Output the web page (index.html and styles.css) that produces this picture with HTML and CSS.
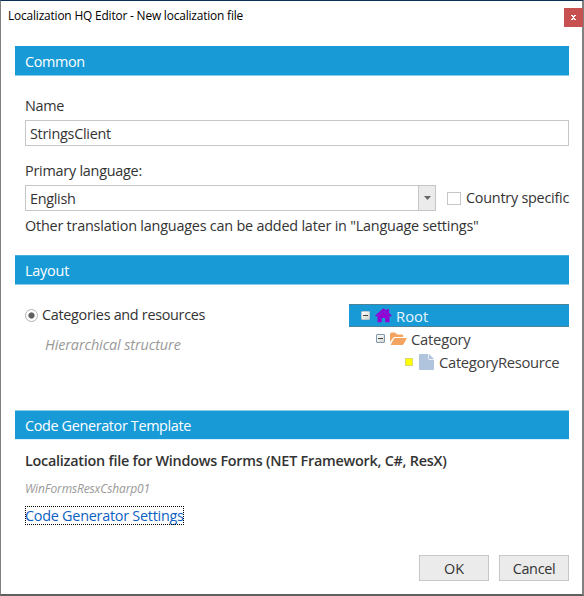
FILE: index.html
```html
<!DOCTYPE html>
<html lang="en">
<head>
<meta charset="utf-8">
<title>Localization HQ Editor</title>
<link rel="stylesheet" href="styles.css">
</head>
<body>
<main class="window">
  <header class="titlebar">
    <h1 class="title">Localization HQ Editor - New localization file</h1>
    <button class="close" aria-label="Close"><svg width="5" height="5" viewBox="0 0 5 5" shape-rendering="crispEdges"><path fill="#fff" d="M0 0h2v1H0zM3 0h2v1H3zM1 1h3v1H1zM2 2h1v1H2zM1 3h3v1H1zM0 4h2v1H0zM3 4h2v1H3z"/></svg></button>
  </header>

  <section class="section common">
    <h2 class="heading"><span class="t-common">Common</span></h2>
    <div class="content">
      <div class="label name-label">Name</div>
      <div class="input"><span class="t-client">StringsClient</span></div>
      <div class="label language-label"><span class="t-primary">Primary language:</span></div>
      <div class="language-row">
        <div class="select"><span class="select-value">English</span><span class="select-arrow"><svg width="7" height="4" viewBox="0 0 7 4"><path fill="#666" d="M0 0h7L3.5 4z"/></svg></span></div>
        <span class="checkbox"></span>
        <span class="t-country">Country specific</span>
      </div>
      <div class="hint"><span class="t-hint">Other translation languages can be added later in "Language settings"</span></div>
    </div>
  </section>

  <section class="section layout">
    <h2 class="heading"><span class="t-layout">Layout</span></h2>
    <div class="layout-row">
      <div class="option">
        <div class="radio-row"><span class="radio"></span><span class="t-categories">Categories and resources</span></div>
        <div class="description"><span class="t-structure">Hierarchical structure</span></div>
      </div>
      <div class="tree">
        <div class="node root">
          <span class="toggle"></span>
          <svg class="home" width="17" height="15" viewBox="0 0 17 15"><path fill="#9400d3" d="M8.500.2 11.500 2.800V1.200H14V5l2.800 2.500-1 1.300L14.500 7.800V14.200H10.200V10H6.800v4.200H2.500V7.800L1.200 8.800l-1-1.300z"/><path fill="none" stroke="#5a45d5" stroke-width=".7" d="M2.500 8.200 8.500 3l6 5.200"/></svg>
          <span class="t-root">Root</span>
        </div>
        <div class="node category">
          <span class="toggle"></span>
          <svg class="folder" width="17" height="14" viewBox="0 0 17 14"><path fill="#f4a460" d="M0 10V2Q0 .500 1.500.500H5L7 2.500h5Q13.300 2.500 13.300 4V5H5Q3.500 5 2.600 6.400zM.500 13 3.800 7Q4.300 6 5.500 6H16q1 0 .5 1L13.700 12Q13.100 13 12 13z"/></svg>
          <span class="t-category">Category</span>
        </div>
        <div class="node resource">
          <span class="marker"></span>
          <svg class="file" width="15" height="16" viewBox="0 0 15 16"><path fill="#b0c4de" d="M1 0h8.300v4.700q0 1 1 1H15V15q0 1-1 1H1q-1 0-1-1V1q0-1 1-1zM10 0l5 5h-5z"/></svg>
          <span class="t-resource">CategoryResource</span>
        </div>
      </div>
    </div>
  </section>

  <section class="section template">
    <h2 class="heading"><span class="t-generator">Code Generator Template</span></h2>
    <div class="content">
      <div class="template-name"><span class="t-file">Localization file for Windows Forms (NET Framework, C#, ResX)</span></div>
      <div class="template-id"><span class="t-id">WinFormsResxCsharp01</span></div>
      <a class="settings" href="#"><span class="t-settings">Code Generator Settings</span></a>
    </div>
  </section>

  <footer class="actions">
    <button class="button"><span class="t-ok">OK</span></button>
    <button class="button"><span class="t-cancel">Cancel</span></button>
  </footer>
</main>
</body>
</html>
```
FILE: styles.css
```css
* { box-sizing: border-box; }
body {
  margin: 0;
  font: 14.4px/20px "Open Sans", "Noto Sans", sans-serif;
  color: #333;
  white-space: nowrap;
}
.window {
  width: 584px;
  height: 596px;
  display: flex;
  flex-direction: column;
  background: #fff;
  border: solid #808080;
  border-width: 1px 2px 2px 1px;
  border-top-color: #0b3157;
  border-bottom-color: #606060;
}
.titlebar { height: 45px; display: flex; justify-content: space-between; padding: 7px 0 0 7px; }
.title { margin: 0; font-size: 11.9px; line-height: 15px; font-weight: 400; color: #000; letter-spacing: -.17px; }
.close {
  width: 19px; height: 19px; margin-right: -1px; padding: 0; border: 0;
  background: #c75050; display: flex; align-items: center; justify-content: center;
}
.section { margin: 0 13px 0 14px; }
.common { height: 209px; }
.layout { height: 155px; }
.heading {
  height: 30px; margin: 0; padding: 1px 10px 0; background: #189ad7;
  border-bottom: 1px solid #8bcceb; color: #fff; font-size: 14.4px; font-weight: 400; line-height: 29px;
}
.content { padding-left: 10px; }
.name-label { padding-top: 20px; height: 44px; letter-spacing: -.3px; }
.input { height: 26px; border: 1px solid #c6c6c6; padding: 3px 4px; }
.language-label { height: 39px; padding-top: 15px; }
.language-row { display: flex; align-items: center; height: 26px; }
.select { width: 411px; height: 26px; flex: none; border: 1px solid #c6c6c6; display: flex; }
.select-value { flex: 1; padding: 3px 4px; letter-spacing: -.3px; }
.select-arrow { width: 17px; background: #ebebeb; border-left: 1px solid #c6c6c6; display: flex; align-items: center; justify-content: center; }
.checkbox { width: 14px; height: 13px; border: 1px solid #c6c6c6; margin: 0 5px 0 11px; flex: none; }
.hint { padding-top: 5px; }
.layout .heading { border-top: 1px solid #48aee0; padding-top: 0; }
.layout-row { display: flex; justify-content: space-between; padding-top: 19px; }
.option { padding: 1px 0 0 10px; }
.radio-row { display: flex; align-items: center; gap: 4px; height: 20px; }
.radio { width: 13px; height: 13px; border: 1px solid #b4b4b4; border-radius: 50%; background: radial-gradient(circle, #606060 2.7px, #fff 3.5px); }
.description { padding: 10px 0 0 20px; font-style: italic; color: #999; }
.tree { width: 220px; color: #404040; font-size: 14.8px; }
.node { display: flex; align-items: center; height: 23px; }
.root { height: 23px; padding-left: 12px; background: #189ad7; border: solid #4d819a; border-width: 1px 0; color: #e8f6fc; }
.category { padding-left: 27px; }
.resource { padding-left: 56px; }
.toggle {
  width: 9px; height: 9px; flex: none; border: 1px solid #8298ad; border-radius: 1px;
  background: linear-gradient(#444, #444) center / 5px 1px no-repeat, linear-gradient(135deg, #fff, #d4d4cc);
}
.root .toggle { border-color: #b9c6cb; }
.home { margin: 0 4px 0 5px; flex: none; }
.folder { margin: 0 4px 0 5px; flex: none; }
.marker { width: 8px; height: 8px; background: #ff0; border: 1px solid #d8d870; flex: none; }
.file { margin: 0 5px 0 6px; flex: none; }
.template .heading { border-top: 1px solid #8bd0e9; border-bottom-color: #d9f1fb; padding-top: 0; }
.template-name { padding-top: 11px; font-weight: 600; height: 40px; }
.template-id { font-size: 12px; font-style: italic; color: #999; height: 26px; line-height: 17px; }
.settings {
  display: block; width: 159px; height: 19px; line-height: 19px; color: #0b61c4;
  text-decoration: none; outline: 1px dotted #000; outline-offset: -1px;
}
.actions { margin-top: auto; height: 39px; display: flex; justify-content: flex-end; gap: 10px; padding-right: 13px; }
.button { width: 70px; height: 26px; border: 1px solid #c6c6c6; background: #ebebeb; padding: 1px 0 0; font: inherit; color: #333; }

/* Tracking per text run */
.t-common { letter-spacing: -.35px; }
.t-client { letter-spacing: -.27px; }
.t-primary { letter-spacing: -.24px; }
.t-country { letter-spacing: -.24px; }
.t-hint { letter-spacing: -.21px; }
.t-layout { letter-spacing: -.2px; }
.t-categories { letter-spacing: -.3px; }
.t-structure { letter-spacing: -.1px; }
.t-category { letter-spacing: -.25px; }
.t-resource { letter-spacing: -.32px; }
.t-generator { letter-spacing: -.35px; }
.t-file { letter-spacing: -.25px; }
.t-id { letter-spacing: -.13px; }
.t-settings { letter-spacing: -.25px; }
.t-cancel { letter-spacing: -.3px; }
```
